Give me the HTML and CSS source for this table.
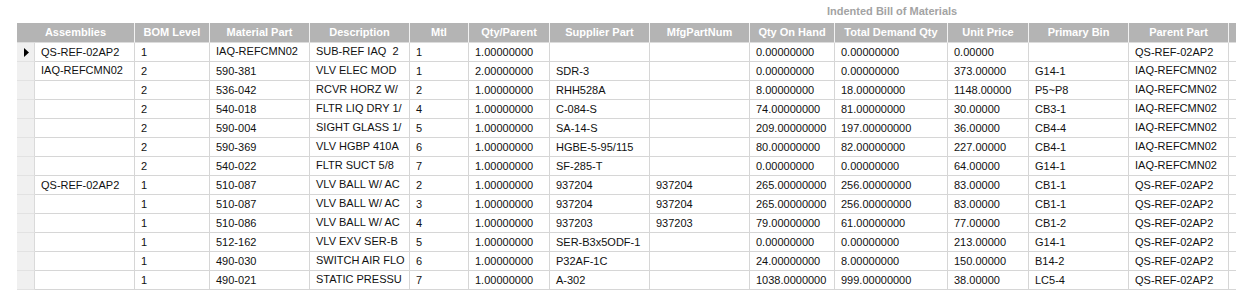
FILE: index.html
```html
<!DOCTYPE html>
<html>
<head>
<meta charset="utf-8">
<link rel="stylesheet" href="styles.css">
</head>
<body>
<div class="title">Indented Bill of Materials</div>
<table class="grid">
  <colgroup>
    <col class="w-ind"><col class="w100"><col class="w75"><col class="w100"><col class="w100"><col class="w59"><col class="w81"><col class="w100"><col class="w100"><col class="w85"><col class="w113"><col class="w81"><col class="w100"><col class="w100"><col class="w-extra">
  </colgroup>
  <thead>
    <tr>
      <th colspan="2">Assemblies</th><th>BOM Level</th><th>Material Part</th><th>Description</th><th>Mtl</th><th>Qty/Parent</th><th>Supplier Part</th><th>MfgPartNum</th><th>Qty On Hand</th><th>Total Demand Qty</th><th>Unit Price</th><th>Primary Bin</th><th>Parent Part</th><th></th>
    </tr>
  </thead>
  <tbody>
    <tr><td class="ind"><svg width="5" height="9" viewBox="0 0 5 9"><polygon points="0,0 5,4.5 0,9" fill="#000"/></svg></td><td>QS-REF-02AP2</td><td>1</td><td class="u">IAQ-REFCMN02</td><td class="u">SUB-REF IAQ&nbsp; 2</td><td>1</td><td>1.00000000</td><td></td><td></td><td>0.00000000</td><td>0.00000000</td><td>0.00000</td><td></td><td>QS-REF-02AP2</td><td></td></tr>
    <tr><td class="ind"></td><td class="u">IAQ-REFCMN02</td><td>2</td><td>590-381</td><td class="u">VLV ELEC MOD</td><td>1</td><td>2.00000000</td><td>SDR-3</td><td></td><td>0.00000000</td><td>0.00000000</td><td>373.00000</td><td>G14-1</td><td class="u">IAQ-REFCMN02</td><td></td></tr>
    <tr><td class="ind"></td><td></td><td>2</td><td>536-042</td><td class="u">RCVR HORZ W/</td><td>2</td><td>1.00000000</td><td>RHH528A</td><td></td><td>8.00000000</td><td>18.00000000</td><td>1148.00000</td><td>P5~P8</td><td class="u">IAQ-REFCMN02</td><td></td></tr>
    <tr><td class="ind"></td><td></td><td>2</td><td>540-018</td><td class="u">FLTR LIQ DRY 1/</td><td>4</td><td>1.00000000</td><td>C-084-S</td><td></td><td>74.00000000</td><td>81.00000000</td><td>30.00000</td><td>CB3-1</td><td class="u">IAQ-REFCMN02</td><td></td></tr>
    <tr><td class="ind"></td><td></td><td>2</td><td>590-004</td><td class="u">SIGHT GLASS 1/</td><td>5</td><td>1.00000000</td><td>SA-14-S</td><td></td><td>209.00000000</td><td>197.00000000</td><td>36.00000</td><td>CB4-4</td><td class="u">IAQ-REFCMN02</td><td></td></tr>
    <tr><td class="ind"></td><td></td><td>2</td><td>590-369</td><td class="u">VLV HGBP 410A</td><td>6</td><td>1.00000000</td><td>HGBE-5-95/115</td><td></td><td>80.00000000</td><td>82.00000000</td><td>227.00000</td><td>CB4-1</td><td class="u">IAQ-REFCMN02</td><td></td></tr>
    <tr><td class="ind"></td><td></td><td>2</td><td>540-022</td><td class="u">FLTR SUCT 5/8</td><td>7</td><td>1.00000000</td><td>SF-285-T</td><td></td><td>0.00000000</td><td>0.00000000</td><td>64.00000</td><td>G14-1</td><td class="u">IAQ-REFCMN02</td><td></td></tr>
    <tr><td class="ind"></td><td>QS-REF-02AP2</td><td>1</td><td>510-087</td><td class="u">VLV BALL W/ AC</td><td>2</td><td>1.00000000</td><td>937204</td><td>937204</td><td>265.00000000</td><td>256.00000000</td><td>83.00000</td><td>CB1-1</td><td>QS-REF-02AP2</td><td></td></tr>
    <tr><td class="ind"></td><td></td><td>1</td><td>510-087</td><td class="u">VLV BALL W/ AC</td><td>3</td><td>1.00000000</td><td>937204</td><td>937204</td><td>265.00000000</td><td>256.00000000</td><td>83.00000</td><td>CB1-1</td><td>QS-REF-02AP2</td><td></td></tr>
    <tr><td class="ind"></td><td></td><td>1</td><td>510-086</td><td class="u">VLV BALL W/ AC</td><td>4</td><td>1.00000000</td><td>937203</td><td>937203</td><td>79.00000000</td><td>61.00000000</td><td>77.00000</td><td>CB1-2</td><td>QS-REF-02AP2</td><td></td></tr>
    <tr><td class="ind"></td><td></td><td>1</td><td>512-162</td><td class="u">VLV EXV SER-B</td><td>5</td><td>1.00000000</td><td>SER-B3x5ODF-1</td><td></td><td>0.00000000</td><td>0.00000000</td><td>213.00000</td><td>G14-1</td><td>QS-REF-02AP2</td><td></td></tr>
    <tr><td class="ind"></td><td></td><td>1</td><td>490-030</td><td class="u">SWITCH AIR FLO</td><td>6</td><td>1.00000000</td><td>P32AF-1C</td><td></td><td>24.00000000</td><td>8.00000000</td><td>150.00000</td><td>B14-2</td><td>QS-REF-02AP2</td><td></td></tr>
    <tr><td class="ind"></td><td></td><td>1</td><td>490-021</td><td class="u">STATIC PRESSU</td><td>7</td><td>1.00000000</td><td>A-302</td><td></td><td>1038.0000000</td><td>999.00000000</td><td>38.00000</td><td>LC5-4</td><td>QS-REF-02AP2</td><td></td></tr>
  </tbody>
</table>
</body>
</html>
```
FILE: styles.css
```css
html, body {
  margin: 0;
  padding: 0;
  overflow: hidden;
  background: #fff;
}
body {
  font-family: "Liberation Sans", Arial, sans-serif;
  font-size: 11px;
  color: #111;
  width: 1236px;
  height: 296px;
}
.title {
  height: 23px;
  box-sizing: border-box;
  padding: 5px 0 0 827px;
  font-weight: bold;
  font-size: 11px;
  line-height: 13px;
  color: #a3a3a3;
  white-space: nowrap;
}
.grid {
  margin-left: 17px;
  border-collapse: separate;
  border-spacing: 0;
  table-layout: fixed;
  width: 1252px;
}
.w-ind { width: 18px; }
.w100 { width: 100px; }
.w75 { width: 75px; }
.w59 { width: 59px; }
.w81 { width: 81px; }
.w85 { width: 85px; }
.w113 { width: 113px; }
.w-extra { width: 40px; }
.grid th {
  background: #b4b4b4;
  color: #fff;
  font-weight: bold;
  font-size: 11px;
  line-height: 19px;
  padding: 0;
  text-align: center;
  border-right: 1px solid #f2f2f2;
  border-bottom: 1px solid #dcdcdc;
  white-space: nowrap;
  overflow: hidden;
}
.grid td {
  padding: 0 0 0 6px;
  line-height: 18px;
  border-right: 1px solid #d6d6d6;
  border-bottom: 1px solid #d6d6d6;
  white-space: nowrap;
  overflow: hidden;
  text-overflow: clip;
  vertical-align: middle;
}
.grid td.u {
  line-height: 16px;
  padding-bottom: 2px;
}
.grid td.ind {
  background: #f0f0f0;
  padding: 0 0 0 7px;
  border-right: 1px solid #dadada;
  border-bottom: 1px solid #e2e2e2;
}
.grid td.ind svg {
  display: block;
}
```
